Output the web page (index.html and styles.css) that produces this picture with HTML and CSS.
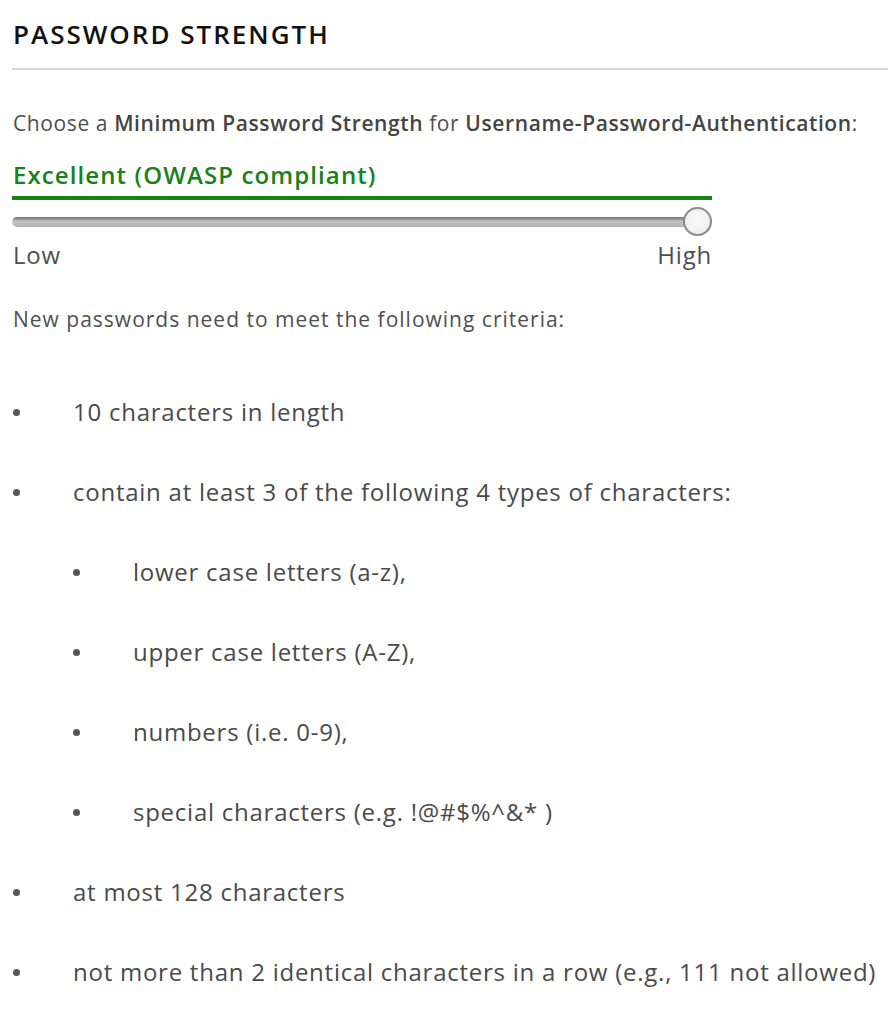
FILE: index.html
```html
<!DOCTYPE html>
<html>
<head>
<meta charset="utf-8">
<link rel="stylesheet" href="styles.css">
</head>
<body>
<div class="page">
  <h2 class="title">PASSWORD STRENGTH</h2>
  <div class="rule"></div>
  <p class="intro">Choose a <b>Minimum Password Strength</b> for <b>Username-Password-Authentication</b>:</p>
  <div class="strength">
    <div class="level">Excellent (OWASP compliant)</div>
    <div class="level-bar"></div>
    <div class="slider">
      <div class="track"></div>
      <div class="knob"></div>
    </div>
    <div class="ends"><span>Low</span><span>High</span></div>
  </div>
  <p class="criteria">New passwords need to meet the following criteria:</p>
  <ul class="list">
    <li><span class="txt">10 characters in length</span></li>
    <li><span class="txt">contain at least 3 of the following 4 types of characters:</span></li>
    <li class="sub"><span class="txt">lower case letters (a-z),</span></li>
    <li class="sub"><span class="txt">upper case letters (A-Z),</span></li>
    <li class="sub"><span class="txt">numbers (i.e. 0-9),</span></li>
    <li class="sub"><span class="txt">special characters (e.g. !@#$%^&amp;* )</span></li>
    <li><span class="txt">at most 128 characters</span></li>
    <li><span class="txt">not more than 2 identical characters in a row (e.g., 111 not allowed)</span></li>
  </ul>
</div>
</body>
</html>
```
FILE: styles.css
```css
html, body {
  margin: 0;
  padding: 0;
  background: #fff;
}
body {
  font-family: "Open Sans", Lato, sans-serif;
  color: #4a4a4a;
}
.page {
  padding: 0 0 0 12px;
}
.title {
  margin: 0;
  padding: 18px 0 0 1px;
  font-size: 26px;
  line-height: 32px;
  font-weight: 600;
  letter-spacing: 2px;
  color: #111;
}
.rule {
  height: 2px;
  background: #d6d6d6;
  margin-top: 18px;
}
.intro {
  margin: 40px 0 0 1px;
  font-size: 21px;
  line-height: 26px;
  letter-spacing: 0.6px;
  color: #4f4f4f;
}
.intro b {
  font-weight: 600;
  color: #444;
}
.strength {
  width: 700px;
  margin-top: 24px;
}
.level {
  font-size: 24px;
  line-height: 30px;
  font-weight: 600;
  letter-spacing: 1.1px;
  color: #178217;
  padding-left: 1px;
}
.level-bar {
  height: 4px;
  background: #178217;
  margin-top: 6px;
}
.slider {
  position: relative;
  height: 29px;
  margin-top: 7px;
  display: flex;
  align-items: center;
}
.track {
  flex: 1;
  height: 10px;
  margin-right: 10px;
  border-radius: 5px;
  background: linear-gradient(#7a7a7a 0, #8e8e8e 2px, #c4c4c4 4px, #b8b8b8 9px, #a8a8a8 10px);
}
.knob {
  position: absolute;
  right: 0;
  top: 0;
  width: 25px;
  height: 25px;
  border-radius: 50%;
  border: 2px solid #8c8c8c;
  background: radial-gradient(circle at 50% 40%, #fafafa 0, #f1f1f1 60%, #e4e4e4 100%);
}
.ends {
  display: flex;
  justify-content: space-between;
  font-size: 24px;
  line-height: 30px;
  letter-spacing: 0.8px;
  color: #4f4f4f;
  margin-top: 4px;
  padding-left: 1px;
}
.criteria {
  margin: 36px 0 0 1px;
  font-size: 21px;
  line-height: 26px;
  letter-spacing: 1px;
  color: #4f4f4f;
}
.list {
  list-style: none;
  margin: 39px 0 0 0;
  padding: 0;
}
.list li {
  display: flex;
  align-items: center;
  height: 80px;
  font-size: 24px;
  letter-spacing: 0.75px;
  color: #4a4a4a;
}
.list li::before {
  content: "";
  flex: none;
  width: 7px;
  height: 7px;
  border-radius: 50%;
  background: #555;
  margin: 2px 53px 0 1px;
}
.list li.sub {
  padding-left: 60px;
}
```
